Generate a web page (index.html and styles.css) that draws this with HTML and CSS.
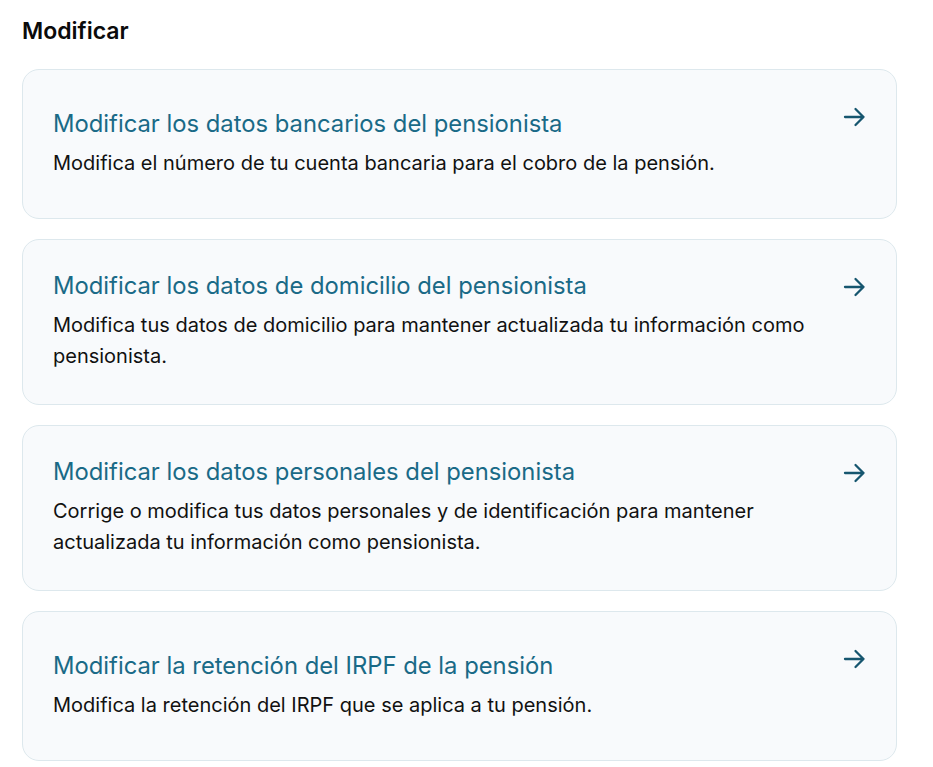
FILE: index.html
```html
<!DOCTYPE html>
<html lang="es">
<head>
<meta charset="utf-8">
<title>Modificar</title>
<link rel="stylesheet" href="styles.css">
</head>
<body>
<main class="page">
  <h2 class="section-title">Modificar</h2>
  <ul class="card-list">
    <li>
      <a class="card" href="#">
        <div class="card-text">
          <h3 class="card-title">Modificar los datos bancarios del pensionista</h3>
          <p class="card-desc">Modifica el número de tu cuenta bancaria para el cobro de la pensión.</p>
        </div>
        <svg class="card-arrow" viewBox="0 0 24 24" aria-hidden="true"><path d="M3 12h18.5M13.5 4l8 8-8 8"/></svg>
      </a>
    </li>
    <li>
      <a class="card" href="#">
        <div class="card-text">
          <h3 class="card-title">Modificar los datos de domicilio del pensionista</h3>
          <p class="card-desc">Modifica tus datos de domicilio para mantener actualizada tu información como pensionista.</p>
        </div>
        <svg class="card-arrow" viewBox="0 0 24 24" aria-hidden="true"><path d="M3 12h18.5M13.5 4l8 8-8 8"/></svg>
      </a>
    </li>
    <li>
      <a class="card" href="#">
        <div class="card-text">
          <h3 class="card-title">Modificar los datos personales del pensionista</h3>
          <p class="card-desc">Corrige o modifica tus datos personales y de identificación para mantener actualizada tu información como pensionista.</p>
        </div>
        <svg class="card-arrow" viewBox="0 0 24 24" aria-hidden="true"><path d="M3 12h18.5M13.5 4l8 8-8 8"/></svg>
      </a>
    </li>
    <li>
      <a class="card" href="#">
        <div class="card-text">
          <h3 class="card-title">Modificar la retención del IRPF de la pensión</h3>
          <p class="card-desc">Modifica la retención del IRPF que se aplica a tu pensión.</p>
        </div>
        <svg class="card-arrow" viewBox="0 0 24 24" aria-hidden="true"><path d="M3 12h18.5M13.5 4l8 8-8 8"/></svg>
      </a>
    </li>
  </ul>
</main>
</body>
</html>
```
FILE: styles.css
```css
* { box-sizing: border-box; }
html, body { margin: 0; padding: 0; background: #ffffff; }
body {
  font-family: Inter, "Noto Sans", "Liberation Sans", sans-serif;
  color: #111111;
}
.page {
  padding: 16px 0 0 22px;
  width: 897px;
}
.section-title {
  margin: 0 0 23px 0;
  font-size: 23px;
  line-height: 30px;
  font-weight: 600;
  color: #0b0b0b;
}
.card-list {
  list-style: none;
  margin: 0;
  padding: 0;
  display: flex;
  flex-direction: column;
  gap: 20px;
}
.card {
  display: flex;
  align-items: flex-start;
  gap: 24px;
  min-height: 150px;
  padding: 31px 30px 32px 30px;
  background: #f8fafc;
  border: 1px solid #dde8ed;
  border-radius: 17px;
  text-decoration: none;
  color: inherit;
}
.card-text {
  flex: 1;
  align-self: center;
  display: flex;
  flex-direction: column;
  gap: 10px;
}
.card-title {
  margin: 0;
  font-size: 23.8px;
  line-height: 29px;
  font-weight: 400;
  color: #1a6a87;
}
.card-desc {
  margin: 0;
  font-size: 20px;
  line-height: 31px;
  color: #111111;
}
.card-arrow {
  flex: none;
  width: 24px;
  height: 24px;
  margin-top: 4px;
  fill: none;
  stroke: #16566f;
  stroke-width: 2.3;
  stroke-linecap: round;
  stroke-linejoin: round;
}
```
